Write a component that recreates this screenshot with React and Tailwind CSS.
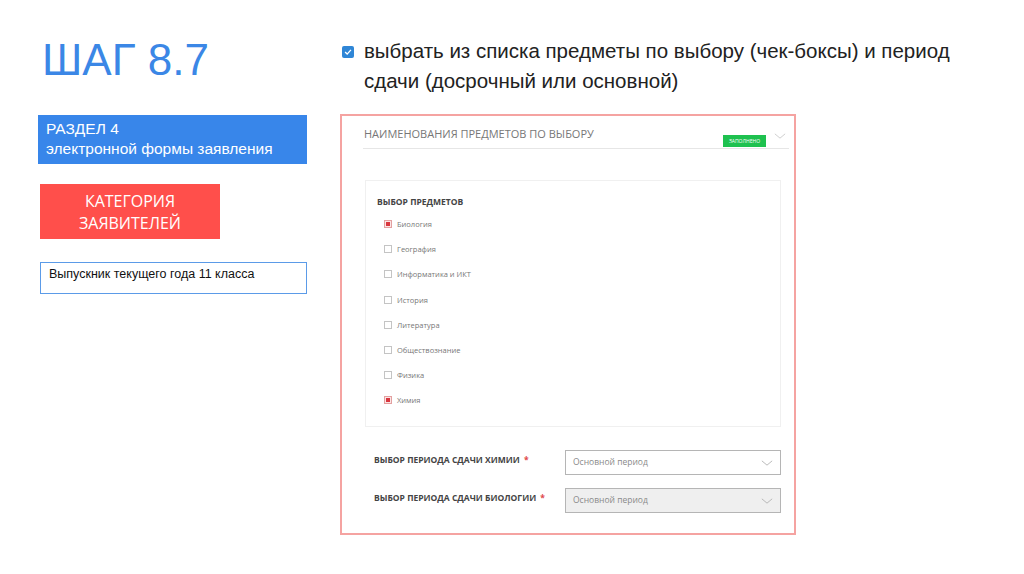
import React from 'react';

const subjects = [
  { name: 'Биология', checked: true },
  { name: 'География' },
  { name: 'Информатика и ИКТ' },
  { name: 'История' },
  { name: 'Литература' },
  { name: 'Обществознание' },
  { name: 'Физика' },
  { name: 'Химия', checked: true },
];

const Chevron = ({ className }) => (
  <svg viewBox="0 0 14 7" fill="none" className={className}>
    <path d="M1 1l6 5 6-5" stroke="currentColor" strokeWidth="1" />
  </svg>
);

const PeriodRow = ({ label, disabled }) => (
  <div className="flex items-center h-[25px]">
    <div className="w-[202px] pl-[11px] pb-[4px] text-[8.5px] font-bold text-[#444] whitespace-nowrap">
      {label} <span className="text-[#e0474c] ml-[2px]">*</span>
    </div>
    <div className={`flex-1 h-[25px] border border-[#b5b5b5] flex items-center justify-between pl-[7px] pr-[7px] text-[8.5px] text-[#8a8a8a] ${disabled ? 'bg-[#efefef]' : 'bg-white'}`}>
      <span>{label && 'Основной период'}</span>
      <Chevron className="w-[12px] h-[6px] text-[#b0b0b0]" />
    </div>
  </div>
);

export default function App() {
  return (
    <div className="w-[1024px] h-[574px] bg-white overflow-hidden flex font-['Liberation_Sans',sans-serif]">
      {/* left column */}
      <div className="w-[340px] shrink-0 pl-[38px] pt-[35px]">
        <h1 className="pl-[4px] text-[44px] leading-[50px] text-[#3b87e6]">ШАГ 8.7</h1>
        <div className="mt-[30px] w-[269px] h-[49px] bg-[#3886ea] pl-[8px] pt-[4px] text-[15.5px] leading-[20px] text-white">
          <div>РАЗДЕЛ 4</div>
          <div className="whitespace-nowrap">электронной формы заявления</div>
        </div>
        <div className="mt-[20px] ml-[2px] w-[180px] h-[55px] bg-[#ff4f4b] flex flex-col items-center justify-center font-['Open_Sans',sans-serif] text-[16px] leading-[22px] text-white">
          <div>КАТЕГОРИЯ</div>
          <div>ЗАЯВИТЕЛЕЙ</div>
        </div>
        <div className="mt-[23px] ml-[2px] w-[267px] h-[32px] border border-[#5b9be8] pl-[8px] pt-[3px] text-[12.5px] leading-[16px] text-[#111]">
          Выпускник текущего года 11 класса
        </div>
      </div>

      {/* right column */}
      <div className="flex-1 pt-[36px]">
        <div className="flex items-start w-[650px]">
          <div className="mt-[10px] ml-[2px] w-[12px] h-[12px] rounded-[2px] bg-[#2f86d6] flex items-center justify-center">
            <svg viewBox="0 0 12 12" className="w-[10px] h-[10px]" fill="none">
              <path d="M2.5 6l2.5 2.5 4.5-5" stroke="white" strokeWidth="1.6" />
            </svg>
          </div>
          <p className="ml-[10px] w-[630px] text-[20.5px] leading-[30px] text-[#222]">
            выбрать из списка предметы по выбору (чек-боксы) и период сдачи (досрочный или основной)
          </p>
        </div>

        <div className="mt-[18px] w-[456px] h-[421px] border-2 border-[#f5a3a1] pl-[21px] pr-[5px] font-['Open_Sans',sans-serif]">
          <div className="h-[33px] border-b border-[#e6e6e6] flex items-start pt-[10px] pl-[1px] relative">
            <span className="text-[11px] leading-[15px] text-[#777]">НАИМЕНОВАНИЯ ПРЕДМЕТОВ ПО ВЫБОРУ</span>
            <span className="absolute left-[360px] top-[19px] w-[43px] h-[12px] bg-[#1ec14f] text-white text-[5px] leading-[12px] text-center">ЗАПОЛНЕНО</span>
            <Chevron className="absolute left-[411px] top-[17px] w-[12px] h-[6px] text-[#c8c8c8]" />
          </div>

          <div className="mt-[31px] w-[416px] ml-[2px] h-[247px] border border-[#f0f0f0] pl-[11px] pt-[14px]">
            <div className="text-[8.5px] leading-[14px] font-bold text-[#444]">ВЫБОР ПРЕДМЕТОВ</div>
            <div className="mt-[11px] flex flex-col gap-[17.2px] pl-[7px]">
              {subjects.map((s) => (
                <div key={s.name} className="flex items-center h-[8px]">
                  <div className={`w-[8px] h-[8px] border flex items-center justify-center ${s.checked ? 'border-[#e3a0a0] bg-[#fbe4e4]' : 'border-[#c4c4c4] bg-white'}`}>
                    {s.checked && <div className="w-[4px] h-[4px] bg-[#d9363e]" />}
                  </div>
                  <span className="ml-[5px] text-[7.5px] leading-[8px] text-[#777]">{s.name}</span>
                </div>
              ))}
            </div>
          </div>

          <div className="mt-[23px] w-[418px] flex flex-col gap-[13px]">
            <PeriodRow label="ВЫБОР ПЕРИОДА СДАЧИ ХИМИИ" />
            <PeriodRow label="ВЫБОР ПЕРИОДА СДАЧИ БИОЛОГИИ" disabled />
          </div>
        </div>
      </div>
    </div>
  );
}
